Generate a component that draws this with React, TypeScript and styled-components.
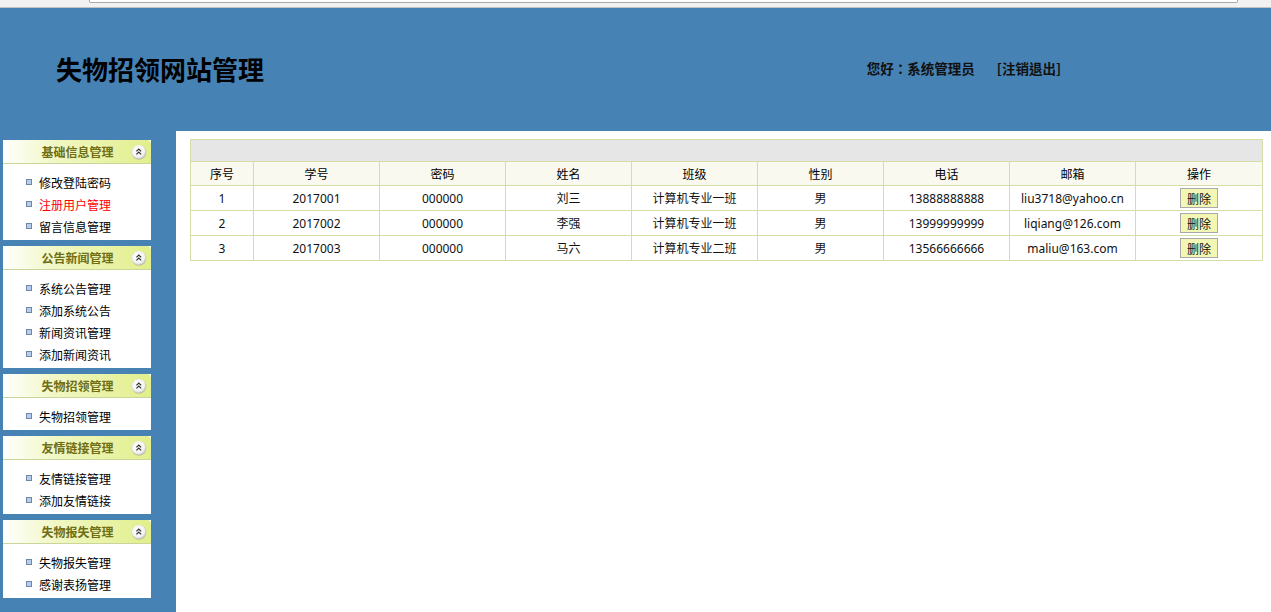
import React from "react";
import styled, { createGlobalStyle } from "styled-components";

const GlobalStyle = createGlobalStyle`
  html, body {
    margin: 0;
    padding: 0;
    background: #ffffff;
    font-family: "Noto Sans", "Noto Sans CJK SC", sans-serif;
    font-size: 12px;
    color: #000;
  }
`;

const Page = styled.div`
  display: flex;
  flex-direction: column;
  min-height: 100vh;
`;

const BrowserStrip = styled.div`
  height: 7px;
  background: #f2f2f2;
  border-bottom: 1px solid #c4c4c4;
  padding: 0 33px 0 89px;
  box-sizing: content-box;
`;

const AddressEdge = styled.div`
  height: 2px;
  background: #ffffff;
  border: 1px solid #a9a9a9;
  border-top: none;
  border-radius: 0 0 2px 2px;
`;

const Header = styled.div`
  box-sizing: border-box;
  height: 123px;
  background: #4682b4;
  display: flex;
  align-items: center;
  justify-content: space-between;
  padding: 0 210px 3px 56px;
`;

const SiteTitle = styled.h1`
  margin: 1px 0 0;
  font-family: "Noto Sans CJK SC", sans-serif;
  font-size: 26px;
  font-weight: 700;
  color: #000;
`;

const UserInfo = styled.div`
  display: flex;
  gap: 22px;
  font-family: "Noto Sans CJK TC", "Noto Sans CJK SC", sans-serif;
  font-size: 13.5px;
  font-weight: 700;
  color: #111;
`;

const Body = styled.div`
  flex: 1;
  display: grid;
  grid-template-columns: 176px 1fr;
`;

const Sidebar = styled.div`
  background: #4682b4;
  padding: 9px 0 0 3px;
  display: flex;
  flex-direction: column;
  gap: 6px;
`;

const Section = styled.div`
  width: 148px;
  background: #fff;
`;

const SectionHead = styled.div`
  height: 23px;
  border-bottom: 1px solid #c9d59a;
  border-radius: 4px 4px 0 0;
  background: linear-gradient(to right, #ffffff 0%, #f1f7c4 35%, #e2ef8c 100%);
  display: flex;
  align-items: center;
  position: relative;
`;

const SectionTitle = styled.span`
  flex: 1;
  text-align: center;
  padding-left: 1px;
  font-family: "Noto Sans CJK SC", sans-serif;
  font-size: 12px;
  font-weight: 700;
  color: #6e6e16;
`;

const Toggle = styled.svg`
  position: absolute;
  right: 4px;
  top: 4px;
`;

const ItemList = styled.ul`
  list-style: none;
  margin: 0;
  padding: 7px 0 3px 23px;
`;

const Item = styled.li<{ $active?: boolean }>`
  height: 22px;
  display: flex;
  align-items: center;
  gap: 6px;
  font-family: "Noto Sans CJK SC", sans-serif;
  font-size: 12px;
  color: ${(p) => (p.$active ? "#ff0000" : "#000")};
`;

const Bullet = styled.span`
  width: 4px;
  height: 4px;
  border: 1px solid #6f86a8;
  background: #b9cdea;
  margin-right: 1px;
`;

const Main = styled.div`
  background: #fff;
  padding: 8px 9px 0 14px;
`;

const Table = styled.table`
  width: 100%;
  border-collapse: collapse;
  table-layout: fixed;
  border: 1px solid #d4dea8;
`;

const TopBar = styled.th`
  height: 21px;
  background: #e6e6e6;
  border: 1px solid #d4dea8;
  padding: 0;
`;

const HeadCell = styled.th`
  height: 23px;
  background: #f9f9ef;
  border: 1px solid #d4dea8;
  font-family: "Noto Sans CJK SC", sans-serif;
  font-size: 12px;
  font-weight: 400;
  padding: 0;
`;

const Cell = styled.td`
  height: 24px;
  border: 1px solid #d4dea8;
  text-align: center;
  font-family: "Noto Sans", "Noto Sans CJK SC", sans-serif;
  font-size: 12px;
  padding: 0;
  color: #111;
`;

const DeleteButton = styled.button`
  width: 38px;
  height: 20px;
  padding: 0;
  background: #f4f7b4;
  border: 1px solid #a9a9a9;
  font-family: "Noto Sans CJK SC", sans-serif;
  font-size: 12px;
  color: #111;
`;

const ToggleIcon = () => (
  <Toggle width="16" height="16" viewBox="0 0 16 16">
    <defs>
      <radialGradient id="tg" cx="45%" cy="40%" r="60%">
        <stop offset="0%" stopColor="#ffffff" />
        <stop offset="75%" stopColor="#f4f4f4" />
        <stop offset="100%" stopColor="#c8c8c8" />
      </radialGradient>
    </defs>
    <circle cx="8" cy="8.5" r="7.3" fill="#9a9a9a" opacity="0.55" />
    <circle cx="7.8" cy="8" r="7" fill="url(#tg)" />
    <path d="M5.4 7.4 L7.8 5 L10.2 7.4 M5.4 10.4 L7.8 8 L10.2 10.4" fill="none" stroke="#333" strokeWidth="1.2" />
  </Toggle>
);

const menus = [
  { title: "基础信息管理", items: ["修改登陆密码", "注册用户管理", "留言信息管理"] },
  { title: "公告新闻管理", items: ["系统公告管理", "添加系统公告", "新闻资讯管理", "添加新闻资讯"] },
  { title: "失物招领管理", items: ["失物招领管理"] },
  { title: "友情链接管理", items: ["友情链接管理", "添加友情链接"] },
  { title: "失物报失管理", items: ["失物报失管理", "感谢表扬管理"] },
];

const columns = ["序号", "学号", "密码", "姓名", "班级", "性别", "电话", "邮箱", "操作"];
const widths = [63, 126, 126, 126, 126, 126, 126, 126, 127];

const users = [
  { no: 1, sid: "2017001", pwd: "000000", name: "刘三", cls: "计算机专业一班", sex: "男", phone: "13888888888", mail: "liu3718@yahoo.cn" },
  { no: 2, sid: "2017002", pwd: "000000", name: "李强", cls: "计算机专业一班", sex: "男", phone: "13999999999", mail: "liqiang@126.com" },
  { no: 3, sid: "2017003", pwd: "000000", name: "马六", cls: "计算机专业二班", sex: "男", phone: "13566666666", mail: "maliu@163.com" },
];

const App: React.FunctionComponent = () => {
  return (
    <Page>
      <GlobalStyle />
      <BrowserStrip>
        <AddressEdge />
      </BrowserStrip>
      <Header>
        <SiteTitle>失物招领网站管理</SiteTitle>
        <UserInfo>
          <span>您好：系统管理员</span>
          <span>[注销退出]</span>
        </UserInfo>
      </Header>
      <Body>
        <Sidebar>
          {menus.map((m) => (
            <Section key={m.title}>
              <SectionHead>
                <SectionTitle>{m.title}</SectionTitle>
                <ToggleIcon />
              </SectionHead>
              <ItemList>
                {m.items.map((it) => (
                  <Item key={it} $active={it === "注册用户管理"}>
                    <Bullet />
                    {it}
                  </Item>
                ))}
              </ItemList>
            </Section>
          ))}
        </Sidebar>
        <Main>
          <Table>
            <colgroup>
              {widths.map((w, i) => (
                <col key={i} style={{ width: w }} />
              ))}
            </colgroup>
            <thead>
              <tr>
                <TopBar colSpan={9} />
              </tr>
              <tr>
                {columns.map((c) => (
                  <HeadCell key={c}>{c}</HeadCell>
                ))}
              </tr>
            </thead>
            <tbody>
              {users.map((u) => (
                <tr key={u.no}>
                  <Cell>{u.no}</Cell>
                  <Cell>{u.sid}</Cell>
                  <Cell>{u.pwd}</Cell>
                  <Cell>{u.name}</Cell>
                  <Cell>{u.cls}</Cell>
                  <Cell>{u.sex}</Cell>
                  <Cell>{u.phone}</Cell>
                  <Cell>{u.mail}</Cell>
                  <Cell>
                    <DeleteButton type="button">删除</DeleteButton>
                  </Cell>
                </tr>
              ))}
            </tbody>
          </Table>
        </Main>
      </Body>
    </Page>
  );
};

export default App;
